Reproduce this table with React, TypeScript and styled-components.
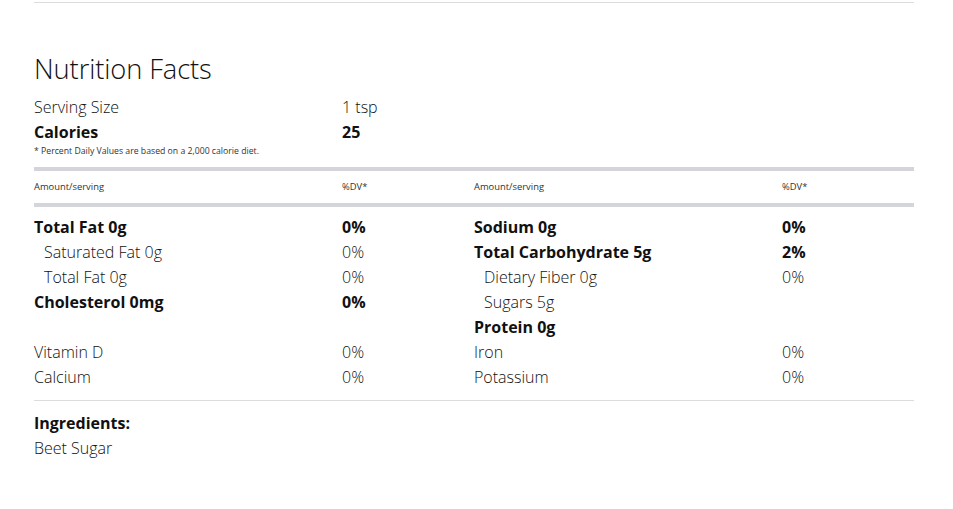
import React from "react";
import styled, { createGlobalStyle } from "styled-components";

const Global = createGlobalStyle`
  html, body { margin: 0; padding: 0; background: #fff; }
  body { font-family: "Open Sans", "Liberation Sans", sans-serif; color: #111; }
`;

const Page = styled.div`
  width: 880px;
  margin-left: 34px;
  padding-top: 2px;
`;

const Rule = styled.div<{ $gap?: number }>`
  height: 1px;
  background: #dcdcdc;
  margin-top: ${(p) => p.$gap ?? 0}px;
`;

const Title = styled.h1`
  margin: 47px 0 7px;
  font-size: 27.3px;
  line-height: 38px;
  font-weight: 300;
  letter-spacing: -0.1px;
`;

const Line = styled.div<{ $bold?: boolean; $indent?: boolean }>`
  display: grid;
  grid-template-columns: 308px 1fr;
  height: 25px;
  line-height: 25px;
  font-size: 16px;
  font-weight: ${(p) => (p.$bold ? 700 : 300)};
  padding-left: ${(p) => (p.$indent ? 10 : 0)}px;
  & > span:last-child {
    margin-left: ${(p) => (p.$indent ? -10 : 0)}px;
  }
`;

const Footnote = styled.div`
  font-size: 8.7px;
  font-weight: 400;
  line-height: 12px;
  color: #333;
`;

const Bar = styled.div<{ $top: number }>`
  height: 4px;
  background: #d4d5db;
  margin-top: ${(p) => p.$top}px;
`;

const Columns = styled.div`
  display: grid;
  grid-template-columns: 440px 440px;
`;

const HeadRow = styled.div`
  display: grid;
  grid-template-columns: 308px 1fr;
  font-size: 9.4px;
  font-weight: 400;
  color: #333;
  height: 32px;
  line-height: 31px;
`;

const Body = styled(Columns)`
  margin-top: 8px;
`;

const Ingredients = styled.div`
  margin-top: 10px;
`;

const IngTitle = styled.div`
  font-size: 16px;
  font-weight: 700;
  line-height: 25px;
`;

const IngText = styled.div`
  font-size: 16px;
  font-weight: 300;
  line-height: 25px;
`;

type Row = { label: string; dv?: string; bold?: boolean; indent?: boolean };

const left: Row[] = [
  { label: "Total Fat 0g", dv: "0%", bold: true },
  { label: "Saturated Fat 0g", dv: "0%", indent: true },
  { label: "Total Fat 0g", dv: "0%", indent: true },
  { label: "Cholesterol 0mg", dv: "0%", bold: true },
  { label: "" },
  { label: "Vitamin D", dv: "0%" },
  { label: "Calcium", dv: "0%" },
];

const right: Row[] = [
  { label: "Sodium 0g", dv: "0%", bold: true },
  { label: "Total Carbohydrate 5g", dv: "2%", bold: true },
  { label: "Dietary Fiber 0g", dv: "0%", indent: true },
  { label: "Sugars 5g", indent: true },
  { label: "Protein 0g", bold: true },
  { label: "Iron", dv: "0%" },
  { label: "Potassium", dv: "0%" },
];

const Column = ({ rows }: { rows: Row[] }) => (
  <div>
    {rows.map((r, i) => (
      <Line key={i} $bold={r.bold} $indent={r.indent}>
        <span>{r.label}</span>
        <span>{r.dv ?? ""}</span>
      </Line>
    ))}
  </div>
);

export default function App() {
  return (
    <>
      <Global />
      <Page>
        <Rule />
        <Title>Nutrition Facts</Title>
        <div>
          <Line>
            <span>Serving Size</span>
            <span>1 tsp</span>
          </Line>
          <Line $bold>
            <span>Calories</span>
            <span>25</span>
          </Line>
        </div>
        <Footnote>* Percent Daily Values are based on a 2,000 calorie diet.</Footnote>
        <Bar $top={10} />
        <Columns>
          <HeadRow>
            <span>Amount/serving</span>
            <span>%DV*</span>
          </HeadRow>
          <HeadRow>
            <span>Amount/serving</span>
            <span>%DV*</span>
          </HeadRow>
        </Columns>
        <Bar $top={0} />
        <Body>
          <Column rows={left} />
          <Column rows={right} />
        </Body>
        <Rule $gap={10} />
        <Ingredients>
          <IngTitle>Ingredients:</IngTitle>
          <IngText>Beet Sugar</IngText>
        </Ingredients>
      </Page>
    </>
  );
}
